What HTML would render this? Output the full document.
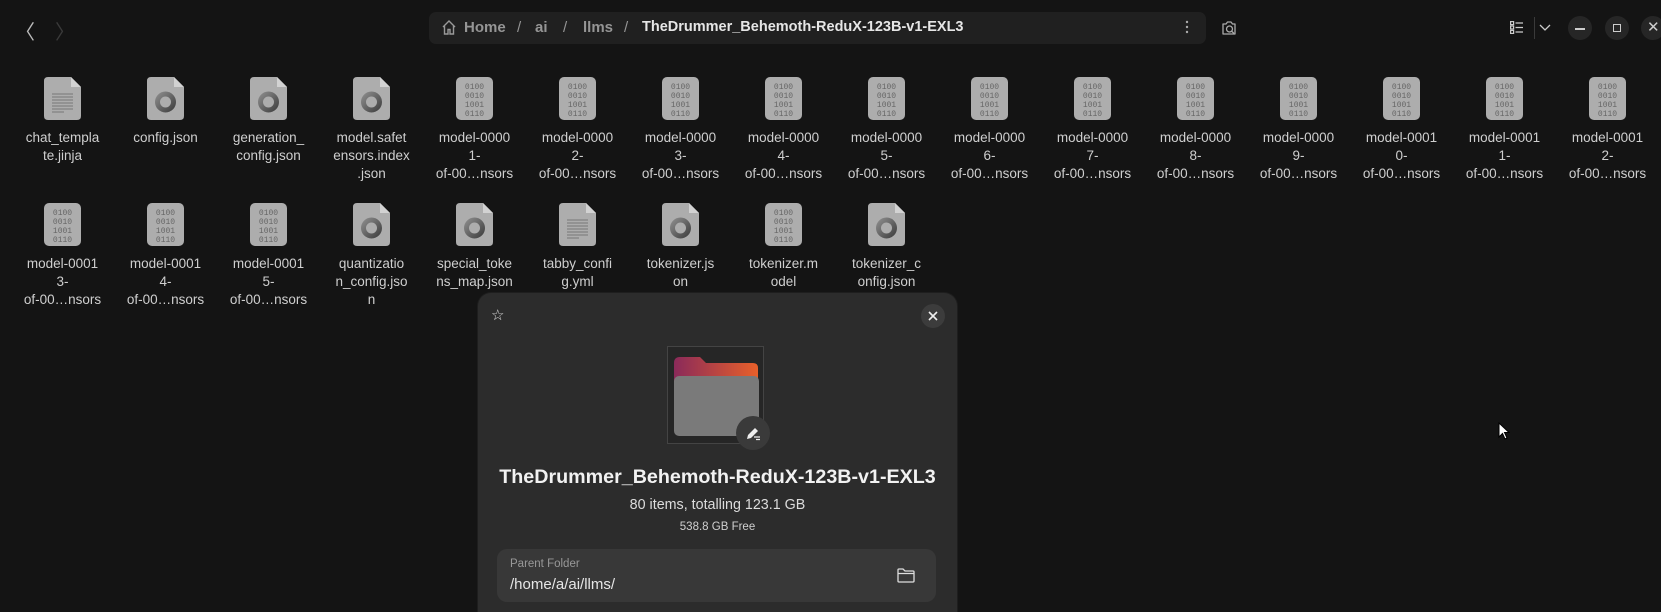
<!DOCTYPE html>
<html style="overflow:hidden;width:1661px;height:612px"><head><meta charset="utf-8">
<style>
*{margin:0;padding:0;box-sizing:border-box}
body{width:1661px;height:612px;background:#141414;overflow:hidden;position:relative;font-family:"Liberation Sans",sans-serif;color:#d6d6d6}
.abs{position:absolute}
.item{position:absolute;width:100px;text-align:center;font-size:13.5px;line-height:18px;color:#cfcfcf}
.item svg{display:block;margin:0 auto 9px}
.circ{position:absolute;width:24px;height:24px;border-radius:50%;background:#262626}
</style></head><body>
<svg width="0" height="0" style="position:absolute">
<defs>
<linearGradient id="sw" x1="0" y1="0" x2="1" y2="1"><stop offset="0" stop-color="#888"/><stop offset="1" stop-color="#444"/></linearGradient>
<linearGradient id="tab" x1="0" y1="0" x2="1" y2="0"><stop offset="0" stop-color="#8a2a5a"/><stop offset="1" stop-color="#e8602a"/></linearGradient>
</defs></svg>

<!-- header -->
<div class="abs" style="left:15px;top:16px;font-size:20px;color:#bbb">&#x2329;</div>
<div class="abs" style="left:55px;top:16px;font-size:20px;color:#3a3a3a">&#x232A;</div>
<div class="abs" style="left:429px;top:12px;width:777px;height:32px;background:#202020;border-radius:7px"></div>
<svg class="abs" style="left:441px;top:19px" width="16" height="17" viewBox="0 0 16 17"><path d="M2 8 L8 2 L14 8 M3.5 7 V15 H7 V10.5 H9 V15 H12.5 V7" fill="none" stroke="#999" stroke-width="1.4"/></svg>
<div class="abs" style="left:464px;top:19px;font-size:15px;font-weight:bold;color:#959595">Home</div>
<div class="abs" style="left:517px;top:19px;font-size:15px;color:#959595">/</div>
<div class="abs" style="left:535px;top:19px;font-size:15px;font-weight:bold;color:#959595">ai</div>
<div class="abs" style="left:563px;top:19px;font-size:15px;color:#959595">/</div>
<div class="abs" style="left:583px;top:19px;font-size:15px;font-weight:bold;color:#959595">llms</div>
<div class="abs" style="left:624px;top:19px;font-size:15px;color:#959595">/</div>
<div class="abs" style="left:642px;top:19px;font-size:14.5px;font-weight:bold;color:#e6e6e6">TheDrummer_Behemoth-ReduX-123B-v1-EXL3</div>
<svg class="abs" style="left:1185px;top:20px" width="4" height="14"><circle cx="2" cy="2" r="1.2" fill="#aaa"/><circle cx="2" cy="7" r="1.2" fill="#aaa"/><circle cx="2" cy="12" r="1.2" fill="#aaa"/></svg>
<svg class="abs" style="left:1220px;top:19px" width="18" height="18" viewBox="0 0 18 18"><path d="M3 5 H6 L7.5 3 H11 L12.5 5 H15 V15 H3 Z" fill="none" stroke="#aaa" stroke-width="1.3" stroke-linejoin="round"/><circle cx="9.5" cy="10" r="3" fill="none" stroke="#aaa" stroke-width="1.3"/><path d="M11.5 12 L14 14.5" stroke="#aaa" stroke-width="1.3"/></svg>
<svg class="abs" style="left:1510px;top:21px" width="14" height="13"><g fill="none" stroke="#ccc" stroke-width="1.2"><rect x="0.6" y="0.6" width="3" height="3"/><rect x="0.6" y="5" width="3" height="3"/><rect x="0.6" y="9.4" width="3" height="3"/></g><g stroke="#ccc" stroke-width="1.2"><path d="M5.5 2H13M5.5 6.5H13M5.5 11H13"/></g></svg>
<div class="abs" style="left:1534px;top:17px;width:1px;height:22px;background:#3a3a3a"></div>
<svg class="abs" style="left:1539px;top:24px" width="12" height="8"><path d="M1 1 L6 6 L11 1" fill="none" stroke="#ccc" stroke-width="1.3"/></svg>
<div class="circ" style="left:1568px;top:16px"></div>
<div class="abs" style="left:1575px;top:28px;width:10px;height:1.5px;background:#ccc"></div>
<div class="circ" style="left:1605px;top:16px"></div>
<div class="abs" style="left:1613px;top:24px;width:8px;height:8px;border:1.3px solid #ccc"></div>
<div class="circ" style="left:1641px;top:16px"></div>
<div class="abs" style="left:1647px;top:18px;font-size:15px;color:#ccc">✕</div>

<div id="grid"></div>

<!-- dialog -->
<div class="abs" style="left:478px;top:293px;width:479px;height:319px;background:#2c2c2c;border-radius:13px 13px 0 0;box-shadow:0 0 0 1px #1e1e1e"></div>
<div class="abs" style="left:491px;top:306px;font-size:15px;color:#ddd">☆</div>
<div class="abs" style="left:921px;top:304px;width:24px;height:24px;border-radius:50%;background:#3c3c3c"></div>
<svg class="abs" style="left:928px;top:311px" width="10" height="10"><path d="M1 1L9 9M9 1L1 9" stroke="#eee" stroke-width="1.6"/></svg>
<div class="abs" style="left:667px;top:346px;width:97px;height:98px;border:1px solid #444;background:#262626"></div>
<svg class="abs" style="left:674px;top:357px" width="85" height="79" viewBox="0 0 85 79"><path d="M6 0 H26 L32 6 H79 Q84 6 84 11 V30 H0 V6 Q0 0 6 0Z" fill="url(#tab)"/><rect x="0" y="19" width="85" height="60" rx="5" fill="#7a7a7a"/></svg>
<div class="abs" style="left:736px;top:416px;width:34px;height:34px;border-radius:50%;background:#3a3a3a"></div>
<svg class="abs" style="left:745px;top:425px" width="16" height="16" viewBox="0 0 16 16"><path d="M2 14 L3 10 L10 3 L13 6 L6 13 Z" fill="#eee"/><path d="M9 12H15M11 14.5H15" stroke="#eee" stroke-width="1.2"/></svg>
<div class="abs" style="left:478px;top:466px;width:479px;text-align:center;font-size:19.7px;font-weight:bold;color:#f2f2f2">TheDrummer_Behemoth-ReduX-123B-v1-EXL3</div>
<div class="abs" style="left:478px;top:497px;width:479px;text-align:center;font-size:14.3px;color:#dcdcdc">80 items, totalling 123.1 GB</div>
<div class="abs" style="left:478px;top:521px;width:479px;text-align:center;font-size:11.5px;color:#d0d0d0">538.8 GB Free</div>
<div class="abs" style="left:497px;top:549px;width:439px;height:53px;background:#383838;border-radius:10px"></div>
<div class="abs" style="left:510px;top:558px;font-size:11.5px;color:#999">Parent Folder</div>
<div class="abs" style="left:510px;top:576px;font-size:15px;color:#e6e6e6">/home/a/ai/llms/</div>
<svg class="abs" style="left:897px;top:568px" width="18" height="15" viewBox="0 0 18 15"><path d="M1 2 Q1 1 2 1 H6 L8 3 H16 Q17 3 17 4 V13 Q17 14 16 14 H2 Q1 14 1 13 Z M1 5.5 H17" fill="none" stroke="#ddd" stroke-width="1.3"/></svg>
<svg class="abs" style="left:1498px;top:422px" width="12" height="18"><path d="M1 1 V15 L4.5 11.5 L7 17 L9 16 L6.5 10.5 H11 Z" fill="#fff" stroke="#000" stroke-width="1"/></svg>

<script>
var doc='<svg width="37" height="43" viewBox="0 0 37 43"><path d="M4 0 H27 L37 10 V39 Q37 43 33 43 H4 Q0 43 0 39 V4 Q0 0 4 0Z" fill="#adadad"/><path d="M27 0 V10 H37Z" fill="#d2d2d2"/>';
var txt=doc+'<g stroke="#777" stroke-width="1"><path d="M8 17H29M8 20H29M8 23H29M8 26H29M8 29H29M8 32H29M8 35H20"/></g></svg>';
var json=doc+'<circle cx="18.5" cy="25" r="8" fill="none" stroke="url(#sw)" stroke-width="5"/></svg>';
var bin='<svg width="37" height="43" viewBox="0 0 37 43"><rect width="37" height="43" rx="5" fill="#adadad"/><g font-family="Liberation Mono,monospace" font-size="8" fill="#666" text-anchor="middle"><text x="18.5" y="12">0100</text><text x="18.5" y="21">0010</text><text x="18.5" y="30">1001</text><text x="18.5" y="39">0110</text></g></svg>';
var r1=[[txt,'chat_templa<br>te.jinja'],[json,'config.json'],[json,'generation_<br>config.json'],[json,'model.safet<br>ensors.index<br>.json']];
for(var i=1;i<=12;i++){var n=(i<10?'0':'')+i;r1.push([bin,'model-000'+n.slice(0,1)+'<br>'+n.slice(1)+'-<br>of-00…nsors']);}
var r2=[[bin,'model-0001<br>3-<br>of-00…nsors'],[bin,'model-0001<br>4-<br>of-00…nsors'],[bin,'model-0001<br>5-<br>of-00…nsors'],[json,'quantizatio<br>n_config.jso<br>n'],[json,'special_toke<br>ns_map.json'],[txt,'tabby_confi<br>g.yml'],[json,'tokenizer.js<br>on'],[bin,'tokenizer.m<br>odel'],[json,'tokenizer_c<br>onfig.json']];
var h='';
function row(a,top){a.forEach(function(it,k){h+='<div class="item" style="left:'+(12.5+k*103)+'px;top:'+top+'px">'+it[0]+it[1]+'</div>';});}
row(r1,77);row(r2,203);
document.getElementById('grid').innerHTML=h;
</script>
</body></html>
